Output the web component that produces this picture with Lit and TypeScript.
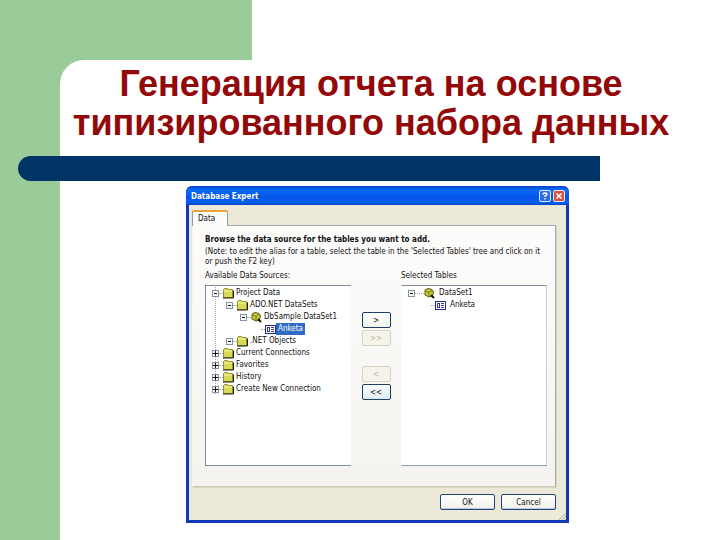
import { LitElement, html, css, svg, nothing } from "lit";
import { customElement, property } from "lit/decorators.js";
import { classMap } from "lit/directives/class-map.js";

type IconName = "folder" | "database" | "table";

interface TreeNode {
  label: string;
  icon: IconName;
  expandable?: boolean;
  open?: boolean;
  selected?: boolean;
  children?: TreeNode[];
}

const SOURCES: TreeNode[] = [
  {
    label: "Project Data",
    icon: "folder",
    expandable: true,
    open: true,
    children: [
      {
        label: "ADO.NET DataSets",
        icon: "folder",
        expandable: true,
        open: true,
        children: [
          {
            label: "DbSample.DataSet1",
            icon: "database",
            expandable: true,
            open: true,
            children: [{ label: "Anketa", icon: "table", selected: true }],
          },
        ],
      },
      { label: ".NET Objects", icon: "folder", expandable: true, open: true },
    ],
  },
  { label: "Current Connections", icon: "folder", expandable: true },
  { label: "Favorites", icon: "folder", expandable: true },
  { label: "History", icon: "folder", expandable: true },
  { label: "Create New Connection", icon: "folder", expandable: true },
];

const SELECTED: TreeNode[] = [
  {
    label: "DataSet1",
    icon: "database",
    expandable: true,
    open: true,
    children: [{ label: "Anketa", icon: "table" }],
  },
];

const ICONS = {
  folder: svg`
    <path d="M0.5 9.5V1.5L1.5 0.5H4.5L5.5 1.5H9.5V9.5Z" fill="#d9d955" stroke="#8f8f35"/>
    <path d="M1 3H9" stroke="#f6f6a0"/>
    <path d="M0 10H10.5V2.5" fill="none" stroke="#20200c"/>`,
  database: svg`
    <path d="M1 2L4 0.5L8 1.5L9.5 4L8.5 8L5 9L1 7Z" fill="#c9cc35" stroke="#55590f"/>
    <path d="M2 3L5 4.5L8 2.5M5 4.5V8" fill="none" stroke="#787b18"/>
    <path d="M7 7L10 10" stroke="#15150a" stroke-width="2"/>`,
  table: svg`
    <rect x="0.5" y="1.5" width="10" height="8" fill="#fff" stroke="#26268c"/>
    <path d="M2 3.5H5M2 7.5H5M2.5 3V8M4.5 3V8M6 3.5H9M6 5.5H9M6 7.5H9" stroke="#3434a0"/>`,
};

@customElement("data-tree")
class DataTree extends LitElement {
  @property({ attribute: false }) nodes: TreeNode[] = [];
  @property() label = "";
  @property({ type: Boolean, reflect: true }) wide = false;

  static styles = css`
    :host {
      display: block;
    }
    .branch {
      list-style: none;
      margin: 0;
      padding: 0;
      background: repeating-linear-gradient(#a5a5a5 0 1px, transparent 1px 2px) 3px 0 / 1px 100%
        no-repeat;
    }
    .branch .branch {
      padding-left: 14px;
      background: none;
    }
    :host([wide]) .branch {
      background: none;
    }
    :host([wide]) .branch .branch {
      padding-left: 16px;
    }
    .row {
      display: flex;
      align-items: center;
      height: 12px;
      line-height: 12px;
      white-space: nowrap;
    }
    .toggle {
      flex: none;
      width: 7px;
      height: 7px;
      padding: 0;
      border: 1px solid #8294a4;
      background: #f7f7f3;
      display: grid;
      place-items: center;
    }
    .sign {
      width: 5px;
      height: 5px;
      display: block;
    }
    .link {
      flex: none;
      width: 4px;
      border-top: 1px dotted #a5a5a5;
    }
    :host([wide]) .branch .link {
      width: 9px;
    }
    :host([wide]) .branch .branch .link {
      width: 4px;
    }
    .gap {
      flex: none;
      width: 7px;
    }
    .icon {
      flex: none;
      width: 11px;
      height: 11px;
      display: block;
    }
    .text {
      padding: 0 2px;
    }
    :host([wide]) .text {
      padding-left: 4px;
    }
    .text.selected {
      background: #316ac5;
      color: #fff;
    }
  `;

  private toggle(node: TreeNode) {
    node.open = !node.open;
    this.requestUpdate();
  }

  private branch(nodes: TreeNode[], role = "group"): unknown {
    return html`<ul
      class="branch"
      role=${role}
      aria-label=${role === "tree" ? this.label : nothing}
    >
      ${nodes.map(
        (node) => html`<li role="treeitem" aria-selected=${node.selected ? "true" : "false"}>
          <div class="row">
            ${node.expandable
              ? html`<button
                  class="toggle"
                  aria-label=${node.label}
                  aria-expanded=${node.open ? "true" : "false"}
                  @click=${() => this.toggle(node)}
                >
                  <svg class="sign" viewBox="0 0 5 5" aria-hidden="true">
                    <path
                      d=${node.open ? "M1 2.5H4" : "M0 2.5H5M2.5 0V5"}
                      stroke="#111"
                    />
                  </svg>
                </button>`
              : html`<span class="gap"></span>`}
            <span class="link"></span>
            <svg class="icon" viewBox="0 0 11 11" aria-hidden="true">${ICONS[node.icon]}</svg>
            <span class=${classMap({ text: true, selected: !!node.selected })}>${node.label}</span>
          </div>
          ${node.open && node.children ? this.branch(node.children) : nothing}
        </li>`
      )}
    </ul>`;
  }

  render() {
    return this.branch(this.nodes, "tree");
  }
}

@customElement("database-expert")
class DatabaseExpert extends LitElement {
  static styles = css`
    :host {
      display: block;
      font: 8px "DejaVu Sans Condensed", "DejaVu Sans", sans-serif;
      color: #111;
    }
    button {
      font: inherit;
      color: inherit;
    }
    .window {
      border: solid #1638b8;
      border-width: 0 3px 3px;
      border-radius: 6px 6px 0 0;
      background: #ece9d8;
    }
    .title-bar {
      display: flex;
      align-items: center;
      gap: 2px;
      height: 19px;
      margin: 0 -3px;
      padding: 0 4px 0 5px;
      border-radius: 6px 6px 0 0;
      background: linear-gradient(#0a3fc8, #0a6cf8 20%, #0455e6 60%, #0560f4 85%, #0345c4);
      color: #fff;
    }
    .title {
      flex: 1;
      margin: 0;
      font-size: 8px;
      line-height: 12px;
      padding-top: 2px;
    }
    .caption {
      width: 12px;
      height: 12px;
      padding: 0;
      border: 1px solid #dfe9ff;
      border-radius: 2px;
      background: #2f6be0;
      display: grid;
      place-items: center;
    }
    .caption.close {
      background: #d9553a;
    }
    .glyph {
      width: 8px;
      height: 8px;
      display: block;
    }
    .body {
      padding: 5px 10px 10px 3px;
    }
    .tab {
      display: block;
      position: relative;
      width: 36px;
      height: 16px;
      margin-bottom: -1px;
      padding: 0 5px 1px;
      border: 1px solid #919b9c;
      border-top: 2px solid #e5a53a;
      border-bottom: 0;
      border-radius: 2px 2px 0 0;
      background: #fcfcfa;
      text-align: left;
    }
    .panel {
      border: 1px solid #a5abac;
      border-left-color: #f7f5ee;
      border-bottom-color: #d2c8b8;
      background: linear-gradient(#fcfcfb, #f5f3ef);
      padding: 8px 8px 20px 12px;
      box-shadow: 1px 1px #d8d4c4;
    }
    .lead {
      margin: 0;
      font-weight: bold;
      line-height: 12px;
    }
    .note {
      margin: 1px 0 0;
      line-height: 10px;
    }
    .picker {
      display: grid;
      grid-template-columns: 1fr 50px 1fr;
      margin-top: 3px;
    }
    .heading {
      margin: 0;
      font-size: 8px;
      font-weight: normal;
      line-height: 12px;
    }
    .list {
      box-sizing: border-box;
      min-height: 181px;
      margin-top: 3px;
      border: solid #7f8b99;
      border-width: 1px 0 1px 1px;
      background: #fff;
      padding: 1px 0 0 6px;
    }
    .list.chosen {
      border-width: 1px;
      border-color: #7f8b99 #c5cdd6 #8d97b0 #fff;
    }
    .moves {
      display: flex;
      flex-direction: column;
      align-items: center;
      gap: 2px;
      padding-top: 42px;
    }
    .push {
      box-sizing: border-box;
      padding: 0;
      height: 16px;
      border: 1px solid #1d3f66;
      border-radius: 2px;
      background: linear-gradient(#fff, #f1f0ea);
    }
    .push:disabled {
      border-color: #d5d3c4;
      background: #f5f4ea;
      color: #b5b39c;
    }
    .move {
      width: 29px;
    }
    .back {
      margin-top: 18px;
    }
    .all {
      background: linear-gradient(#fff, #dcecf4);
    }
    .actions {
      display: flex;
      justify-content: flex-end;
      gap: 6px;
      padding: 7px 0 0;
    }
    .action {
      width: 55px;
      border-color: #24437c;
      box-shadow: inset 0 -1px #b9c8e2;
    }
    .foot {
      position: relative;
    }
    .grip {
      position: absolute;
      right: 0;
      bottom: 0;
      width: 8px;
      height: 8px;
    }
  `;

  render() {
    return html`<section class="window" role="dialog" aria-labelledby="title">
      <header class="title-bar">
        <h2 class="title" id="title">Database Expert</h2>
        <button class="caption" aria-label="Help">
          <svg class="glyph" viewBox="0 0 8 8" aria-hidden="true">
            <path d="M2 2.5Q2 1 4 1T6 2.5Q6 3.5 4 4V5M4 6V7.5" fill="none" stroke="#fff" stroke-width="1.4"/>
          </svg>
        </button>
        <button class="caption close" aria-label="Close">
          <svg class="glyph" viewBox="0 0 8 8" aria-hidden="true">
            <path d="M1.5 1.5L6.5 6.5M6.5 1.5L1.5 6.5" stroke="#fff" stroke-width="1.6"/>
          </svg>
        </button>
      </header>
      <div class="foot">
        <div class="body">
          <button class="tab" role="tab" aria-selected="true">Data</button>
          <div class="panel" role="tabpanel">
            <p class="lead">Browse the data source for the tables you want to add.</p>
            <p class="note">
              (Note: to edit the alias for a table, select the table in the 'Selected Tables' tree
              and click on it or push the F2 key)
            </p>
            <div class="picker">
              <div>
                <h3 class="heading">Available Data Sources:</h3>
                <div class="list">
                  <data-tree label="Available Data Sources" .nodes=${SOURCES}></data-tree>
                </div>
              </div>
              <div class="moves">
                <button class="push move">&gt;</button>
                <button class="push move" disabled>&gt;&gt;</button>
                <button class="push move back" disabled>&lt;</button>
                <button class="push move all">&lt;&lt;</button>
              </div>
              <div>
                <h3 class="heading">Selected Tables</h3>
                <div class="list chosen">
                  <data-tree wide label="Selected Tables" .nodes=${SELECTED}></data-tree>
                </div>
              </div>
            </div>
          </div>
          <div class="actions">
            <button class="push action">OK</button>
            <button class="push action">Cancel</button>
          </div>
        </div>
        <svg class="grip" viewBox="0 0 8 8" aria-hidden="true">
          <path d="M1 8L8 1M4 8L8 4M7 8L8 7" stroke="#a9b38c"/>
        </svg>
      </div>
    </section>`;
  }
}

@customElement("app-root")
class AppRoot extends LitElement {
  static styles = css`
    :host {
      display: block;
      font-family: "Liberation Sans", Arial, sans-serif;
    }
    .slide {
      display: flex;
      flex-direction: column;
      min-height: 100vh;
      background: #fff;
    }
    .band {
      width: 35%;
      height: 60px;
      background: #99cc99;
    }
    .main {
      flex: 1;
      padding-left: 60px;
      background: linear-gradient(#99cc99, #99cc99) left / 120px 100% no-repeat;
    }
    .sheet {
      box-sizing: border-box;
      height: 100%;
      min-height: 480px;
      border-radius: 24px 0 0 0;
      background: #fff;
      padding-top: 4px;
    }
    .heading {
      margin: 0 38px 0 0;
      color: #930808;
      font-size: 36px;
      line-height: 39px;
      text-align: center;
    }
    .rule {
      width: 582px;
      max-width: 100%;
      height: 25px;
      margin: 14px 0 5px -42px;
      border-radius: 13px 0 0 13px;
      background: #003366;
    }
    .shot {
      max-width: 383px;
      margin-left: 126px;
    }
  `;

  render() {
    return html`<main class="slide">
      <div class="band"></div>
      <div class="main">
        <div class="sheet">
          <h1 class="heading">Генерация отчета на основе типизированного набора данных</h1>
          <div class="rule"></div>
          <database-expert class="shot"></database-expert>
        </div>
      </div>
    </main>`;
  }
}
